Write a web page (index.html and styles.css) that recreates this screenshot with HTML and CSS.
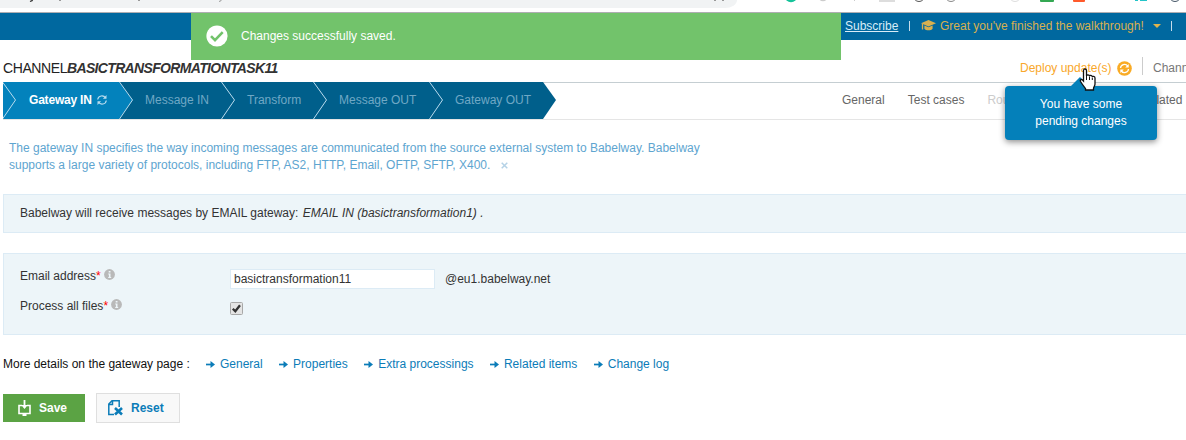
FILE: index.html
```html
<!DOCTYPE html>
<html lang="en">
<head>
<meta charset="utf-8">
<title>Channel</title>
<link rel="stylesheet" href="styles.css">
</head>
<body>
<div class="chrome">
  <div class="omnibox"></div>
  <svg class="chrome-marks" width="1186" height="12" viewBox="0 0 1186 12">
    <path d="M30 1.5l2-.8 1-1.7" fill="none" stroke="#333" stroke-width="1.3"/>
    <g fill="#999"><rect x="59" y="0" width="2" height="1"/><rect x="138" y="0" width="2" height="1"/><rect x="714" y="0" width="2" height="1"/><rect x="722" y="0" width="2" height="1"/></g>
    <path d="M219 1.5l2-.8 1-1.7" fill="none" stroke="#999"/>
    <circle cx="791" cy="-4" r="6.2" fill="#15c39a"/>
    <circle cx="823" cy="-4" r="5.2" fill="#ccc"/>
    <rect x="854" y="0" width="1" height="1" fill="#ccc"/>
    <rect x="879" y="0" width="16" height="2" fill="#ddd"/>
    <circle cx="919" cy="-4" r="5.5" fill="none" stroke="#555"/>
    <circle cx="951" cy="-4" r="5.5" fill="none" stroke="#888"/>
    <circle cx="1015" cy="-4" r="5.5" fill="none" stroke="#ddd"/>
    <rect x="1040" y="-6" width="14" height="8" rx="1" fill="#34a853"/>
    <rect x="1073" y="-6" width="12" height="8" rx="1" fill="#ff5a2c"/>
    <path d="M1135 0h3v1h-3zM1140 0h7v1h-7z" fill="#23c4c8"/>
    <circle cx="1175" cy="-4" r="5.5" fill="none" stroke="#456"/>
  </svg>
</div>
<header class="topbar">
  <a class="subscribe">Subscribe</a>
  <span class="bar bar-a"></span>
  <svg class="cap" width="15" height="12" viewBox="0 0 15 12"><path d="M0 3.2L7.5 0 15 3.2 7.5 6.4z" fill="#d8b04f"/><path d="M3.4 5.5l4.1 1.8 4.1-1.8v3.2c-1.5 2-6.700 2-8.200 0z" fill="#d8b04f"/><path d="M1.500 4v5.500" stroke="#d8b04f" stroke-width="1.300"/></svg>
  <span class="walk">Great you've finished the walkthrough!</span>
  <span class="caret"></span>
  <span class="bar"></span>
</header>
<div class="toast">
  <svg width="22" height="22" viewBox="0 0 22 22"><circle cx="11" cy="11" r="10.600" fill="#fff"/><path d="M5 11.200l4 4 7.700-8" fill="none" stroke="#72c36b" stroke-width="2.600"/></svg>
  <span>Changes successfully saved.</span>
</div>
<div class="heading">
  <div class="title"><span>CHANNEL</span><b>BASICTRANSFORMATIONTASK11</b></div>
  <div class="deploy">
    <span class="deploy-text">Deploy update(s)</span>
    <svg width="15" height="15" viewBox="0 0 15 15"><circle cx="7.500" cy="7.500" r="7.300" fill="#f9ab25"/><path d="M3.500 7a4 4 0 0 1 7.200-2M11.500 8a4 4 0 0 1-7.200 2" fill="none" stroke="#fff" stroke-width="1.300"/><path d="M11.700 3v3.500H8.200zM3.300 12V8.500h3.500z" fill="#fff"/></svg>
    <span class="channels">Chann</span>
  </div>
</div>
<nav class="nav">
  <div class="steps">
    <svg class="chev" width="14" height="37" viewBox="0 0 14 37"><path d="M.5 0L13.500 18 .5 37" fill="none" stroke="#b9dcee"/></svg>
    <div class="step active"><span>Gateway IN</span><svg width="10" height="10" viewBox="0 0 10 10"><path d="M.7 4.500A4.200 4.200 0 0 1 8.500 3M9.300 5.500A4.200 4.200 0 0 1 1.500 7" fill="none" stroke="#b9dcee" stroke-width="1.200"/><path d="M9.500 0v3.700H5.900zM.5 10V6.300h3.600z" fill="#b9dcee"/></svg></div>
    <svg class="chev" width="14" height="37" viewBox="0 0 14 37"><path d="M0 0L13.500 18 0 37z" fill="#0382bc"/><path d="M.5 0L13.500 18 .5 37" fill="none" stroke="#b9dcee"/></svg>
    <div class="step w1">Message IN</div>
    <svg class="chev" width="14" height="37" viewBox="0 0 14 37"><path d="M.5 0L13.500 18 .5 37" fill="none" stroke="#b9dcee"/></svg>
    <div class="step w2">Transform</div>
    <svg class="chev" width="14" height="37" viewBox="0 0 14 37"><path d="M.5 0L13.500 18 .5 37" fill="none" stroke="#b9dcee"/></svg>
    <div class="step w3">Message OUT</div>
    <svg class="chev" width="14" height="37" viewBox="0 0 14 37"><path d="M.5 0L13.500 18 .5 37" fill="none" stroke="#b9dcee"/></svg>
    <div class="step w4">Gateway OUT</div>
  </div>
  <div class="tabs">
    <span>General</span><span>Test cases</span><span class="dim">Rou</span><span class="rel">lated</span>
  </div>
</nav>
<p class="intro">The gateway IN specifies the way incoming messages are communicated from the source external system to Babelway. Babelway<br>supports a large variety of protocols, including FTP, AS2, HTTP, Email, OFTP, SFTP, X400.<svg width="7" height="7" viewBox="0 0 7 7"><path d="M.7.7l5.600 5.600M6.300.7L.7 6.300" stroke="#b5d2e6" stroke-width="1.500"/></svg></p>
<section class="panel summary">Babelway will receive messages by EMAIL gateway: <i>EMAIL IN (basictransformation1) .</i></section>
<section class="panel form">
  <div class="row">
    <label>Email address<em>*</em><svg width="11" height="11" viewBox="0 0 11 11"><circle cx="5.500" cy="5.500" r="5.400" fill="#b9b9b9"/><path d="M4.700 2h1.800v1.600H4.700zM4.200 4.500h2.300v3.600h.7v1h-3v-1h.7V5.500h-.7z" fill="#edf5f9"/></svg></label>
    <input class="field" value="basictransformation11"><span class="domain">@eu1.babelway.net</span>
  </div>
  <div class="row">
    <label>Process all files<em>*</em><svg width="11" height="11" viewBox="0 0 11 11"><circle cx="5.500" cy="5.500" r="5.400" fill="#b9b9b9"/><path d="M4.700 2h1.800v1.600H4.700zM4.200 4.500h2.300v3.600h.7v1h-3v-1h.7V5.500h-.7z" fill="#edf5f9"/></svg></label>
    <svg class="check" width="13" height="13" viewBox="0 0 13 13"><rect x=".5" y=".5" width="12" height="12" rx="1" fill="#e4e4e4" stroke="#a8a8a8"/><path d="M2.800 6.800l2.500 2.500 4.700-6" fill="none" stroke="#333" stroke-width="2.300"/></svg>
  </div>
</section>
<div class="links">
  <span class="lead">More details on the gateway page :</span>
  <a><svg width="9" height="7" viewBox="0 0 9 7"><path d="M0 3.500h6" stroke="#0b7cb8" stroke-width="1.700"/><path d="M4.500 0L9 3.500 4.500 7z" fill="#0b7cb8"/></svg>General</a>
  <a><svg width="9" height="7" viewBox="0 0 9 7"><path d="M0 3.500h6" stroke="#0b7cb8" stroke-width="1.700"/><path d="M4.500 0L9 3.500 4.500 7z" fill="#0b7cb8"/></svg>Properties</a>
  <a><svg width="9" height="7" viewBox="0 0 9 7"><path d="M0 3.500h6" stroke="#0b7cb8" stroke-width="1.700"/><path d="M4.500 0L9 3.500 4.500 7z" fill="#0b7cb8"/></svg>Extra processings</a>
  <a><svg width="9" height="7" viewBox="0 0 9 7"><path d="M0 3.500h6" stroke="#0b7cb8" stroke-width="1.700"/><path d="M4.500 0L9 3.500 4.500 7z" fill="#0b7cb8"/></svg>Related items</a>
  <a><svg width="9" height="7" viewBox="0 0 9 7"><path d="M0 3.500h6" stroke="#0b7cb8" stroke-width="1.700"/><path d="M4.500 0L9 3.500 4.500 7z" fill="#0b7cb8"/></svg>Change log</a>
</div>
<div class="buttons">
  <button class="save"><svg width="13" height="16" viewBox="0 0 13 16"><path d="M4 5.500H1v8h11v-8H9" fill="none" stroke="#fff" stroke-width="1.600"/><path d="M5.600 0h1.800v5h2.400L6.500 9 3.200 5h2.400zM4.500 14h4v2h-4z" fill="#fff"/></svg>Save</button>
  <button class="reset"><svg width="15" height="16" viewBox="0 0 15 16"><path d="M6 14.500H.8V4L4 .8h7.200V7M4.500 1v3.500H1" fill="none" stroke="#0b7cb8" stroke-width="1.500"/><path d="M7 8l7 6.500M14 8l-7 6.500" stroke="#0b7cb8" stroke-width="2.600"/></svg>Reset</button>
</div>
<div class="tooltip">You have some<br>pending changes</div>
<svg class="cursor" width="18" height="24" viewBox="0 0 18 24"><path d="M4.500 13V2.500C4.500.5 7.500.5 7.500 2.500V8c0-1.500 3-1.500 3 .3 0-1.300 2.800-1.200 2.800.8 0-1.200 2.700-1 2.700 1V16c0 2-1.500 3-1.500 4.500V22H6.500v-1.500C5 18.500 3 16 1.500 13.500.7 11.500 2.500 10.500 4.500 13z" fill="#fff" stroke="#111" stroke-width="1.300"/><path d="M7.500 8v4M10.500 8.500V12M13.300 9.500V12" stroke="#111"/></svg>
</body>
</html>
```
FILE: styles.css
```css
* { box-sizing: border-box; }
body {
  margin: 0;
  width: 1186px;
  height: 440px;
  overflow: hidden;
  position: relative;
  background: #fff;
  color: #333;
  font: 12px/17px "Liberation Sans", Arial, sans-serif;
  white-space: nowrap;
}
svg { display: block; flex: none; }
.chrome { height: 13px; border-bottom: 1px solid #aeaeb2; position: relative; }
.omnibox { width: 737px; height: 8px; background: #f1f3f4; border-bottom-right-radius: 12px 8px; }
.chrome-marks { position: absolute; left: 0; top: 0; }
.topbar { height: 27px; background: #00689f; display: flex; align-items: center; padding: 0 0 1px 845px; color: #d8b04f; }
.subscribe { width: 53px; color: #d8ecf7; text-decoration: underline; }
.bar { width: 1px; height: 10px; background: #c5dcea; }
.bar-a { margin-left: 11px; }
.cap { margin-left: 11px; }
.walk { width: 204px; margin-left: 4px; }
.caret { border: 4px solid transparent; border-top-color: #e0b44e; border-bottom: 0; margin: 0 10px 0 9px; }
.toast {
  position: absolute; left: 191px; top: 13px; width: 650px; height: 47px;
  background: #72c36b; color: #fff; display: flex; align-items: center; gap: 13px; padding: 0 0 2px 15px;
}
.toast span { padding-top: 2px; }
.heading { height: 42px; display: flex; justify-content: space-between; padding: 19px 0 0 3px; }
.title { font-size: 14px; line-height: 18px; display: flex; }
.title span { width: 64px; letter-spacing: -.4px; color: #222; }
.title b { font-style: italic; letter-spacing: -.66px; }
.deploy { display: flex; width: 166px; color: #f9a72b; padding-top: 1px; }
.deploy svg { margin-top: 1px; }
.deploy-text { width: 97px; flex: none; }
.channels { flex: none; color: #777; margin-left: 10px; padding-left: 10px; border-left: 1px solid #ccc; height: 18px; margin-top: -3px; padding-top: 3px; }
.nav { height: 38px; margin-left: 3px; border-top: 1px solid #c5ced2; border-bottom: 1px solid #e5e5e5; display: flex; justify-content: space-between; }
.steps {
  display: flex; width: 553px; height: 37px; margin-top: -1px;
  background: #005f8b linear-gradient(#0382bc, #0382bc) no-repeat 0 0 / 116px 37px;
  clip-path: polygon(0 0, 540px 0, 553px 18px, 540px 37px, 0 37px);
}
.step { height: 37px; line-height: 36px; padding-left: 12px; color: #6fa8c5; }
.chev { margin-left: -1px; }
.active { width: 104px; padding-left: 13px; padding-bottom: 1px; color: #fff; display: flex; align-items: center; gap: 5px; font-weight: bold; letter-spacing: -.2px; }
.w1 { width: 89px; padding-left: 12px; }
.w2 { width: 79px; }
.w3 { width: 103px; }
.w4 { width: 110px; }
.tabs { display: flex; width: 344px; line-height: 35px; color: #666; }
.tabs span { margin-right: 23px; }
.tabs .dim { color: #ccc; width: 146px; }
.tabs .rel { margin: 0; }
.intro { margin: 20px 0 0 9px; color: #5ea5d0; height: 34px; }
.intro svg { display: inline-block; margin-left: 11px; }
.panel { margin-left: 3px; background: #edf5f9; border: 1px solid #dcebf5; border-right: 0; }
.summary { margin-top: 20px; height: 39px; padding: 10px 16px; }
.summary i { margin-left: 1px; letter-spacing: .01px; }
.form { height: 82px; margin-top: 20px; padding: 13px 0 0 16px; }
.row { display: flex; height: 30px; }
.row label { width: 210px; display: flex; padding-top: 1px; }
.row label svg { margin: 1px 0 0 3px; }
.row em { color: #f00; font-style: normal; }
.field { width: 205px; height: 20px; margin-top: 2px; border: 1px solid #dcebf5; background: #fff; padding: 0 3px; color: #333; font: inherit; outline: 0; }
.domain { margin: 4px 0 0 10px; }
.check { margin-top: 5px; }
.links { display: flex; margin: 21px 0 0 3px; color: #0b7cb8; }
.lead { color: #111; width: 203px; }
.links a { display: flex; align-items: center; gap: 5px; margin-right: 16.4px; }
.links a:nth-of-type(n) { position: static; }
.buttons { display: flex; gap: 11px; margin: 21px 0 0 3px; }
.buttons button { height: 28px; margin: 0; display: flex; align-items: center; font: bold 12px "Liberation Sans", Arial, sans-serif; }
.save { width: 82px; border: 0; background: #5ba344; color: #fff; padding: 0 0 0 15px; gap: 8px; }
.buttons .reset { width: 84px; height: 30px; margin-top: -1px; border: 1px solid #dfdfdf; background: #f8f8f8; color: #0b7cb8; padding: 0 0 0 11px; gap: 8px; }
.tooltip {
  position: absolute; left: 1005px; top: 86px; width: 152px; height: 54px; padding: 10px 0;
  background: #0480ba; color: #fff; text-align: center; border-radius: 4px; box-shadow: 0 2px 6px rgba(0,0,0,.45);
}
.tooltip::before { content: ""; position: absolute; left: 66px; top: -9px; border: 9px solid transparent; border-top: 0; border-bottom-color: #0480ba; }
.cursor { position: absolute; left: 1079px; top: 68px; }
```
